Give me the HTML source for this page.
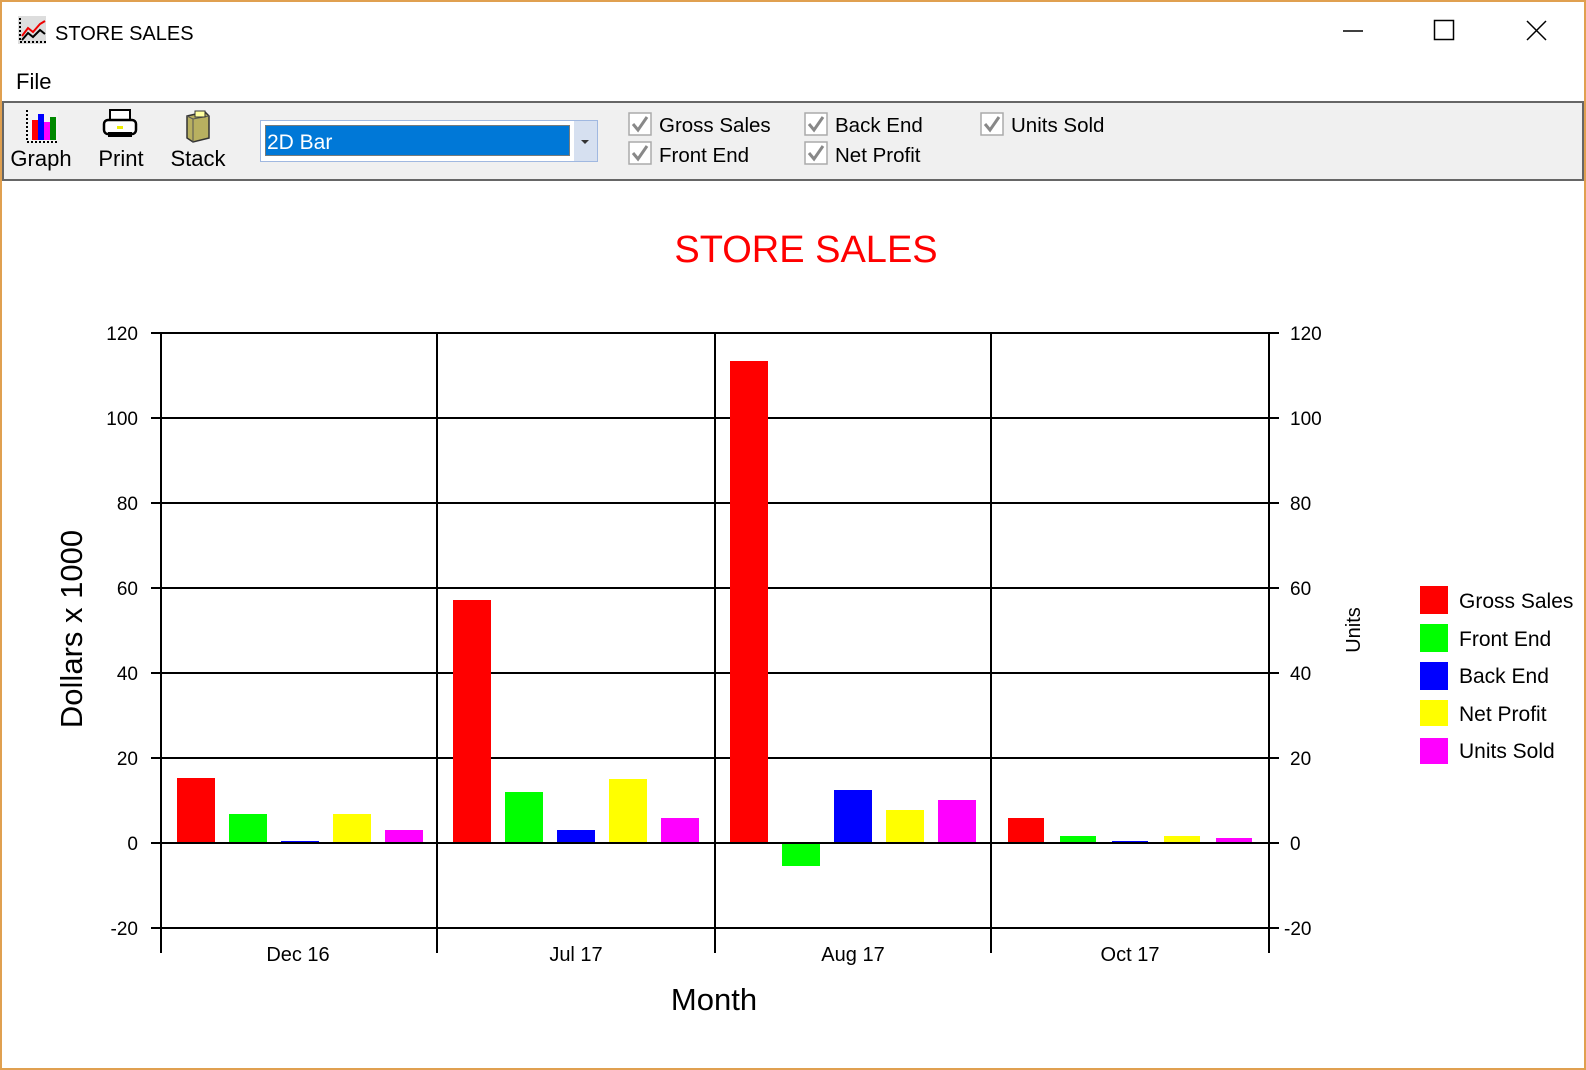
<!DOCTYPE html>
<html><head><meta charset="utf-8"><style>
html,body{margin:0;padding:0;background:#fff;}
svg{display:block;}
text{font-family:"Liberation Sans",Arial,sans-serif;}
</style></head><body>
<svg width="1586" height="1070" viewBox="0 0 1586 1070" xmlns="http://www.w3.org/2000/svg">
<rect x="0" y="0" width="1586" height="1070" fill="#fff"/>
<rect x="1" y="1" width="1584" height="1068" fill="none" stroke="#e0a050" stroke-width="2"/>
<g transform="translate(18,16)">
<rect x="0" y="0" width="28" height="28" fill="#ddd"/>
<path d="M2 2 V26 H28" stroke="#000" stroke-width="2" fill="none" stroke-dasharray="2 2"/>
<path d="M4 20 L10 12 L15 16 L22 8 L27 5" stroke="#e00" stroke-width="2" fill="none"/>
<path d="M4 24 L10 17 L15 21 L22 14 L27 18" stroke="#000" stroke-width="2" fill="none"/>
</g>
<text x="55" y="40" font-size="20" fill="#000">STORE SALES</text>
<line x1="1343" y1="31" x2="1363" y2="31" stroke="#000" stroke-width="1.5"/>
<rect x="1434.5" y="20.5" width="19" height="19" fill="none" stroke="#000" stroke-width="1.5"/>
<path d="M1527 21 L1546 40 M1546 21 L1527 40" stroke="#000" stroke-width="1.5"/>
<text x="16" y="89" font-size="22" fill="#000">File</text>
<rect x="3" y="102" width="1580" height="78" fill="#f0f0f0" stroke="#666" stroke-width="2"/>
<g transform="translate(26,110)">
<rect x="0" y="0" width="32" height="32" fill="#f4f4f4"/>
<path d="M1 0 V32 H32" stroke="#000" stroke-width="2" fill="none" stroke-dasharray="2 2"/>
<rect x="6" y="10" width="6" height="20" fill="#f00"/>
<rect x="12" y="4" width="6" height="26" fill="#00f"/>
<rect x="18" y="12" width="6" height="18" fill="#f0f"/>
<rect x="24" y="7" width="6" height="23" fill="#080"/>
</g>
<g transform="translate(103,110)">
<rect x="7" y="0" width="20" height="10" fill="#fff" stroke="#000" stroke-width="2"/>
<rect x="1" y="10" width="32" height="14" rx="4" fill="#fff" stroke="#000" stroke-width="2.5"/>
<rect x="5" y="22" width="24" height="5" fill="#000"/>
<rect x="14" y="16" width="6" height="3" fill="#ee0"/>
</g>
<g transform="translate(185,110)">
<path d="M2 6 L20 2 L24 6 L24 28 L8 32 L2 28 Z" fill="#b8b060" stroke="#333" stroke-width="1.5"/>
<path d="M2 6 L8 9 L24 6 M8 9 V32" stroke="#555" fill="none"/>
<rect x="10" y="1" width="10" height="6" fill="#ffffa0" stroke="#333"/>
</g>
<text x="41" y="166" font-size="22" text-anchor="middle">Graph</text>
<text x="121" y="166" font-size="22" text-anchor="middle">Print</text>
<text x="198" y="166" font-size="22" text-anchor="middle">Stack</text>
<rect x="260.5" y="120.5" width="337" height="41" fill="#fff" stroke="#a0b8e0"/>
<rect x="574" y="121" width="23" height="40" fill="#d6e0f0"/>
<path d="M581 140 L589 140 L585 144 Z" fill="#333"/>
<rect x="265" y="125" width="305" height="31" fill="#0078d7"/>
<rect x="265.5" y="125.5" width="304" height="30" fill="none" stroke="#f08020" stroke-dasharray="1 1"/>
<text x="267" y="149" font-size="21" fill="#fff">2D Bar</text>
<g font-size="20.5" fill="#000">
<g stroke="#aaa" stroke-width="1.5" fill="#fff">
<rect x="629" y="113" width="22" height="22"/><rect x="629" y="142" width="22" height="22"/>
<rect x="805" y="113" width="22" height="22"/><rect x="805" y="142" width="22" height="22"/>
<rect x="981" y="113" width="22" height="22"/>
</g>
<g stroke="#888" stroke-width="3" fill="none">
<path d="M633 124 L638 130 L647 117"/><path d="M633 153 L638 159 L647 146"/>
<path d="M809 124 L814 130 L823 117"/><path d="M809 153 L814 159 L823 146"/>
<path d="M985 124 L990 130 L999 117"/>
</g>
<text x="659" y="132">Gross Sales</text><text x="659" y="162">Front End</text>
<text x="835" y="132">Back End</text><text x="835" y="162">Net Profit</text>
<text x="1011" y="132">Units Sold</text>
</g>
<text x="806" y="262" font-size="38" fill="#f00" text-anchor="middle">STORE SALES</text>
<g stroke="#000" stroke-width="2">
<line x1="151" y1="333" x2="1279" y2="333"/>
<line x1="151" y1="418" x2="1279" y2="418"/>
<line x1="151" y1="503" x2="1279" y2="503"/>
<line x1="151" y1="588" x2="1279" y2="588"/>
<line x1="151" y1="673" x2="1279" y2="673"/>
<line x1="151" y1="758" x2="1279" y2="758"/>
<line x1="151" y1="843" x2="1279" y2="843"/>
<line x1="151" y1="928" x2="1279" y2="928"/>
<line x1="161" y1="333" x2="161" y2="953"/>
<line x1="437" y1="333" x2="437" y2="953"/>
<line x1="715" y1="333" x2="715" y2="953"/>
<line x1="991" y1="333" x2="991" y2="953"/>
<line x1="1269" y1="333" x2="1269" y2="953"/>
</g>
<g>
<rect x="177" y="778" width="38" height="65" fill="#f00"/>
<rect x="229" y="814" width="38" height="29" fill="#0f0"/>
<rect x="281" y="841" width="38" height="2" fill="#00f"/>
<rect x="333" y="814" width="38" height="29" fill="#ff0"/>
<rect x="385" y="830" width="38" height="13" fill="#f0f"/>
<rect x="453" y="600" width="38" height="243" fill="#f00"/>
<rect x="505" y="792" width="38" height="51" fill="#0f0"/>
<rect x="557" y="830" width="38" height="13" fill="#00f"/>
<rect x="609" y="779" width="38" height="64" fill="#ff0"/>
<rect x="661" y="818" width="38" height="25" fill="#f0f"/>
<rect x="730" y="361" width="38" height="482" fill="#f00"/>
<rect x="782" y="843" width="38" height="23" fill="#0f0"/>
<rect x="834" y="790" width="38" height="53" fill="#00f"/>
<rect x="886" y="810" width="38" height="33" fill="#ff0"/>
<rect x="938" y="800" width="38" height="43" fill="#f0f"/>
<rect x="1008" y="818" width="36" height="25" fill="#f00"/>
<rect x="1060" y="836" width="36" height="7" fill="#0f0"/>
<rect x="1112" y="841" width="36" height="2" fill="#00f"/>
<rect x="1164" y="836" width="36" height="7" fill="#ff0"/>
<rect x="1216" y="838" width="36" height="5" fill="#f0f"/>
</g>
<line x1="151" y1="843" x2="1279" y2="843" stroke="#000" stroke-width="2"/>
<g font-size="19" fill="#000" text-anchor="end">
<text x="138" y="340">120</text><text x="138" y="425">100</text><text x="138" y="510">80</text>
<text x="138" y="595">60</text><text x="138" y="680">40</text><text x="138" y="765">20</text>
<text x="138" y="850">0</text><text x="138" y="935">-20</text>
</g>
<g font-size="19" fill="#000">
<text x="1290" y="340">120</text><text x="1290" y="425">100</text><text x="1290" y="510">80</text>
<text x="1290" y="595">60</text><text x="1290" y="680">40</text><text x="1290" y="765">20</text>
<text x="1290" y="850">0</text><text x="1284" y="935">-20</text>
</g>
<g font-size="20" fill="#000" text-anchor="middle">
<text x="298" y="961">Dec 16</text><text x="576" y="961">Jul 17</text>
<text x="853" y="961">Aug 17</text><text x="1130" y="961">Oct 17</text>
</g>
<text x="714" y="1010" font-size="31" text-anchor="middle">Month</text>
<text transform="translate(82,629) rotate(-90)" font-size="31" text-anchor="middle">Dollars x  1000</text>
<text transform="translate(1360,630) rotate(-90)" font-size="20" text-anchor="middle">Units</text>
<g>
<rect x="1420" y="586" width="28" height="28" fill="#f00"/>
<rect x="1420" y="624" width="28" height="28" fill="#0f0"/>
<rect x="1420" y="662" width="28" height="28" fill="#00f"/>
<rect x="1420" y="700" width="28" height="26" fill="#ff0"/>
<rect x="1420" y="738" width="28" height="26" fill="#f0f"/>
</g>
<g font-size="21" fill="#000">
<text x="1459" y="608">Gross Sales</text>
<text x="1459" y="646">Front End</text>
<text x="1459" y="683">Back End</text>
<text x="1459" y="721">Net Profit</text>
<text x="1459" y="758">Units Sold</text>
</g>
</svg>
</body></html>
